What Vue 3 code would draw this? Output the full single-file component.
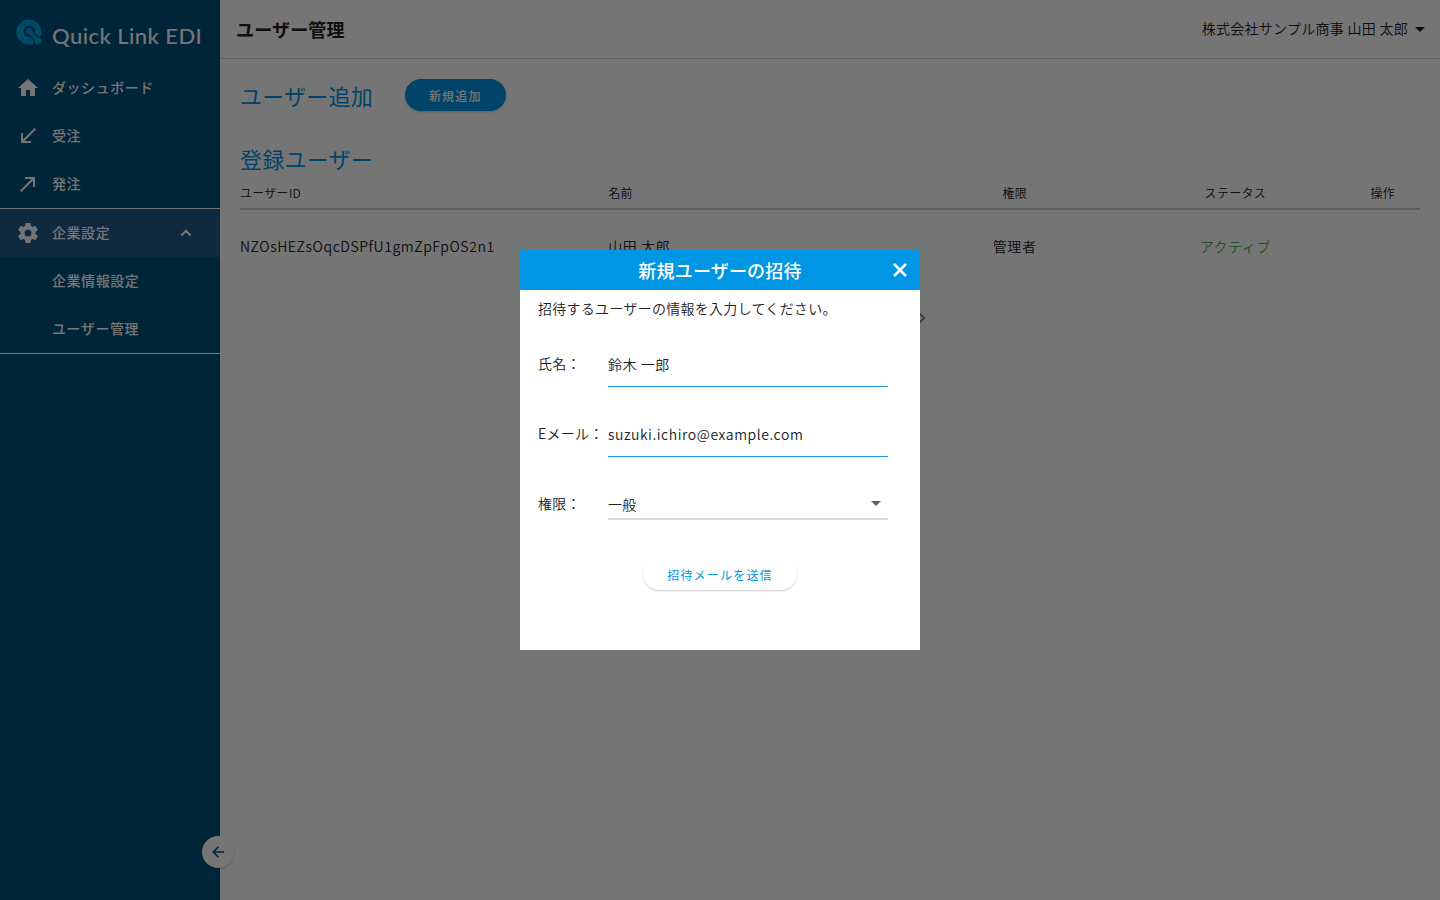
<script setup>
import { ref } from 'vue'

const name = ref('鈴木 一郎')
const email = ref('suzuki.ichiro@example.com')
const role = ref('一般')
const users = [
  { id: 'NZOsHEZsOqcDSPfU1gmZpFpOS2n1', name: '山田 太郎', role: '管理者', status: 'アクティブ' },
]
</script>

<template>
  <div class="app">
    <aside class="sidebar">
      <a class="brand" href="#">
        <svg class="mark" viewBox="0 0 26 26" aria-hidden="true">
          <path d="M17 25.500H12.500A12.500 12.500 0 1 1 25.300 14C25.300 16.500 24 17.800 22 17.800L17 20Z" fill="#00a0e0" />
          <circle cx="13.300" cy="12.300" r="5.800" fill="#00507b" />
          <path d="M14 13L22 22" stroke="#00507b" stroke-width="6" />
          <circle cx="22" cy="22" r="4.800" fill="#00507b" />
          <circle cx="13.300" cy="12.300" r="3.200" fill="#00a0e0" />
          <path d="M14 13L21.500 21.500" stroke="#00a0e0" stroke-width="3.600" />
          <circle cx="21.800" cy="21.800" r="3.600" fill="#00a0e0" />
        </svg>
        <span class="brand-name">Quick Link EDI</span>
      </a>
      <nav class="nav">
        <a class="item" href="#">
          <svg class="icon" viewBox="0 0 24 24"><path d="M10 20v-6h4v6h5v-8h3L12 3 2 12h3v8z" /></svg>
          <span class="text">ダッシュボード</span>
        </a>
        <a class="item" href="#">
          <svg class="icon" viewBox="0 0 24 24"><path d="M20 5.41 18.59 4 7 15.59V9H5v10h10v-2H8.41z" /></svg>
          <span class="text">受注</span>
        </a>
        <a class="item" href="#">
          <svg class="icon" viewBox="0 0 24 24"><path d="M9 5v2h6.590L4 18.590 5.410 20 17 8.410V15h2V5z" /></svg>
          <span class="text">発注</span>
        </a>
        <div class="group">
          <button class="item active" type="button" aria-expanded="true">
            <svg class="icon" viewBox="0 0 24 24"><path d="M12 15.500A3.500 3.500 0 0 1 8.500 12 3.500 3.500 0 0 1 12 8.500a3.500 3.500 0 0 1 3.500 3.500 3.500 3.500 0 0 1-3.500 3.500m7.430-2.530c.04-.32.07-.64.07-.97s-.03-.66-.07-1l2.110-1.630c.19-.15.24-.42.12-.64l-2-3.460c-.12-.22-.39-.31-.61-.22l-2.490 1c-.52-.39-1.060-.73-1.690-.98l-.37-2.650A.506.506 0 0 0 14 2h-4c-.25 0-.46.18-.5.42l-.37 2.650c-.63.25-1.170.59-1.690.98l-2.490-1c-.22-.09-.49 0-.61.22l-2 3.460c-.13.22-.07.49.12.64L4.570 11c-.04.34-.07.67-.07 1s.03.65.07.97l-2.110 1.660c-.19.15-.25.42-.12.64l2 3.460c.12.22.39.3.61.22l2.490-1.010c.52.4 1.060.74 1.690.99l.37 2.650c.04.24.25.42.5.42h4c.25 0 .46-.18.5-.42l.37-2.650c.63-.26 1.170-.59 1.690-.99l2.490 1.010c.22.08.49 0 .61-.22l2-3.460c.12-.22.07-.49-.12-.64z" /></svg>
            <span class="text">企業設定</span>
            <svg class="chevron" viewBox="0 0 24 24"><path d="M7.410 15.410 12 10.830l4.590 4.580L18 14l-6-6-6 6z" /></svg>
          </button>
          <a class="item sub" href="#"><span class="text">企業情報設定</span></a>
          <a class="item sub" href="#"><span class="text">ユーザー管理</span></a>
        </div>
      </nav>
      <button class="collapse" type="button" aria-label="メニューを閉じる">
        <svg viewBox="0 0 24 24"><path d="M20 11v2H8l5.500 5.500-1.420 1.420L4.160 12l7.920-7.920L13.500 5.500 8 11z" /></svg>
      </button>
    </aside>

    <div class="main">
      <header class="topbar">
        <h1>ユーザー管理</h1>
        <button class="account" type="button">
          <span class="text">株式会社サンプル商事 山田 太郎</span>
          <svg class="caret" viewBox="0 0 10 5"><path d="M0 0h10L5 5z" /></svg>
        </button>
      </header>
      <main class="content">
        <section class="add">
          <h2>ユーザー追加</h2>
          <button class="pill primary" type="button">新規追加</button>
        </section>
        <section>
          <h2>登録ユーザー</h2>
          <table>
            <colgroup>
              <col class="c-id" /><col class="c-name" /><col class="c-role" /><col class="c-status" /><col class="c-op" />
            </colgroup>
            <thead>
              <tr>
                <th class="left">ユーザーID</th>
                <th class="left">名前</th>
                <th>権限</th>
                <th>ステータス</th>
                <th>操作</th>
              </tr>
            </thead>
            <tbody>
              <tr v-for="u in users" :key="u.id">
                <td class="left">{{ u.id }}</td>
                <td class="left">{{ u.name }}</td>
                <td>{{ u.role }}</td>
                <td class="status">{{ u.status }}</td>
                <td></td>
              </tr>
            </tbody>
          </table>
          <div class="pager">
            <button type="button" aria-label="前へ"><svg viewBox="0 0 24 24"><path d="M15.410 16.590 10.830 12l4.580-4.590L14 6l-6 6 6 6z" /></svg></button>
            <button type="button" aria-label="次へ"><svg viewBox="0 0 24 24"><path d="M8.590 16.590 13.170 12 8.590 7.410 10 6l6 6-6 6z" /></svg></button>
          </div>
        </section>
      </main>
    </div>

    <div class="overlay">
      <form class="dialog" role="dialog" aria-labelledby="dialog-title" @submit.prevent>
        <div class="dialog-head">
          <h2 id="dialog-title">新規ユーザーの招待</h2>
          <button class="close" type="button" aria-label="閉じる">
            <svg viewBox="0 0 14 14"><path d="M1 1l12 12M13 1L1 13" /></svg>
          </button>
        </div>
        <div class="dialog-body">
          <p>招待するユーザーの情報を入力してください。</p>
          <div class="field">
            <label for="name">氏名：</label>
            <input id="name" v-model="name" type="text" />
          </div>
          <div class="field">
            <label for="email">Eメール：</label>
            <input id="email" v-model="email" type="email" />
          </div>
          <div class="field">
            <label for="role">権限：</label>
            <div class="select">
              <select id="role" v-model="role">
                <option>一般</option>
                <option>管理者</option>
              </select>
              <svg class="caret" viewBox="0 0 10 5"><path d="M0 0h10L5 5z" /></svg>
            </div>
          </div>
          <button class="pill send" type="submit">招待メールを送信</button>
        </div>
      </form>
    </div>
  </div>
</template>

<style>
body {
  margin: 0;
}
</style>

<style scoped>
* {
  box-sizing: border-box;
}
.app {
  display: flex;
  min-height: 100vh;
  font: 350 14px/20px "Noto Sans CJK JP", sans-serif;
  letter-spacing: 0.02em;
  color: #212121;
  background: #fff;
}
button,
input,
select {
  margin: 0;
  padding: 0;
  border: 0;
  background: none;
  font: inherit;
  letter-spacing: inherit;
  color: inherit;
}
h1,
h2,
p {
  margin: 0;
}
svg {
  display: block;
  fill: currentColor;
}
.text {
  padding-bottom: 2px;
}
.sidebar {
  position: relative;
  flex: 0 0 220px;
  color: #fff;
  background: #00507b;
}
.brand {
  display: flex;
  gap: 10px;
  height: 64px;
  padding: 19px 0 0 16px;
  color: #fff;
  text-decoration: none;
}
.mark {
  width: 26px;
  height: 26px;
}
.brand-name {
  padding-top: 3px;
  font: 500 22px/28px Lato, sans-serif;
  letter-spacing: 0.02em;
  white-space: nowrap;
}
.item {
  display: flex;
  align-items: center;
  width: 100%;
  height: 48px;
  padding: 0 24px 0 16px;
  gap: 12px;
  font-weight: 500;
  letter-spacing: 0.04em;
  text-align: left;
  color: #fff;
  text-decoration: none;
}
.icon {
  width: 24px;
  height: 24px;
}
.group {
  border: solid #fff;
  border-width: 1px 0;
}
.active {
  background: #205a8c;
}
.chevron {
  width: 20px;
  height: 20px;
  margin-left: auto;
  stroke: currentColor;
}
.sub {
  padding-left: 52px;
}
.collapse {
  position: absolute;
  right: -14px;
  bottom: 32px;
  display: grid;
  place-items: center;
  width: 32px;
  height: 32px;
  border-radius: 50%;
  background: #fff;
  color: #00507b;
  box-shadow: 0 1px 2px rgba(0, 0, 0, 0.2);
}
.collapse svg {
  width: 18px;
  height: 18px;
}
.main {
  flex: 1;
  min-width: 0;
}
.topbar {
  display: flex;
  align-items: center;
  justify-content: space-between;
  height: 59px;
  padding: 0 15px 0 16px;
  border-bottom: 1px solid #d8d8d8;
}
.topbar h1 {
  font-size: 18px;
  font-weight: 700;
  line-height: 28px;
  letter-spacing: 0.01em;
}
.account {
  display: flex;
  align-items: center;
  gap: 7px;
}
.caret {
  width: 10px;
  height: 5px;
}
.content {
  padding: 20px;
}
.content h2 {
  font-size: 22px;
  font-weight: 400;
  line-height: 32px;
  letter-spacing: 0.01em;
  color: #0096e4;
}
.add {
  display: flex;
  gap: 32px;
  margin-bottom: 31px;
}
.pill {
  height: 32px;
  padding: 2px 24px 0;
  border-radius: 16px;
  font-size: 12px;
  font-weight: 400;
  letter-spacing: 0.1em;
  box-shadow: 0 1px 2px rgba(0, 0, 0, 0.2);
}
.primary {
  font-weight: 500;
  color: #fff;
  background: #0096e4;
}
table {
  width: 100%;
  border-collapse: collapse;
  table-layout: fixed;
}
.c-id {
  width: 31.2%;
}
.c-name {
  width: 25.1%;
}
.c-role,
.c-status {
  width: 18.7%;
}
th {
  height: 35px;
  padding: 4px 0 0;
  border-bottom: 2px solid #d0d0d0;
  font-size: 12px;
  font-weight: inherit;
}
td {
  height: 73px;
  padding: 0;
  letter-spacing: 0.04em;
  text-align: center;
}
.left {
  text-align: left;
}
.status {
  color: #4caf50;
}
.pager {
  display: flex;
  justify-content: center;
  gap: 164px;
  padding-top: 26px;
  color: #757575;
}
.pager svg {
  width: 20px;
  height: 20px;
}
.overlay {
  position: fixed;
  inset: 0;
  display: grid;
  place-items: center;
  background: rgba(0, 0, 0, 0.54);
}
.dialog {
  width: 400px;
  min-height: 400px;
  background: #fff;
}
.dialog-head {
  display: grid;
  grid-template-columns: 40px 1fr 40px;
  place-items: center;
  height: 40px;
  color: #fff;
  background: #0096e4;
}
.dialog-head h2 {
  grid-column: 2;
  font-size: 18px;
  font-weight: 500;
  letter-spacing: 0.01em;
}
.close svg {
  width: 14px;
  height: 14px;
  fill: none;
  stroke: currentColor;
  stroke-width: 2.500;
}
.dialog-body {
  display: flex;
  flex-direction: column;
  padding: 8px 32px 0 18px;
}
.field {
  display: flex;
  height: 70px;
}
p + .field {
  margin-top: 24px;
}
.field label {
  flex: 0 0 70px;
  padding-top: 11px;
}
.field input {
  flex: 1;
  min-width: 0;
  height: 45px;
  border-bottom: 1px solid #2196f3;
  outline: 0;
  letter-spacing: 0.04em;
}
.select {
  position: relative;
  flex: 1;
  height: 38px;
  border-bottom: 2px solid #dcdcdc;
}
.select select {
  width: 100%;
  height: 44px;
  appearance: none;
  outline: 0;
}
.select .caret {
  position: absolute;
  right: 7px;
  top: 19px;
  color: #616161;
  pointer-events: none;
}
.send {
  align-self: center;
  margin-top: 6px;
  margin-left: 14px;
  color: #0096e4;
  background: #fff;
}
</style>
